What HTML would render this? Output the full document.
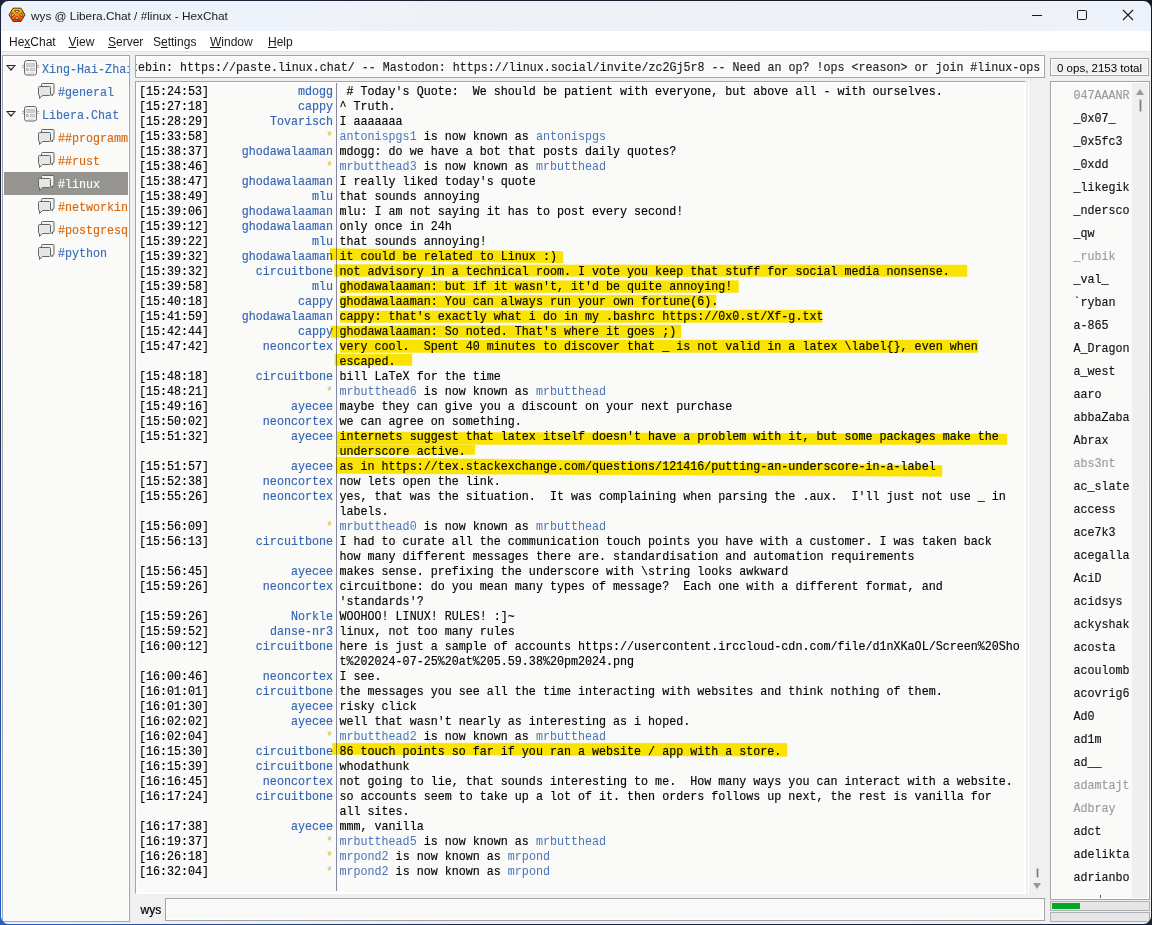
<!DOCTYPE html>
<html><head><meta charset="utf-8"><style>
*{margin:0;padding:0;box-sizing:border-box}
html,body{width:1152px;height:925px;overflow:hidden;background:linear-gradient(to right,#1d5fc4 0%,#1f4f9a 30%,#1a2a48 60%,#151c28 100%)}
#win{position:absolute;left:0;top:0;width:1152px;height:925px;background:#f0f0f0;overflow:hidden}
#frame{position:absolute;left:0;top:0;width:1152px;height:925px;border-radius:8px;box-shadow:inset -1px 1px 0 #1a2332;pointer-events:none}
#lb{position:absolute;left:0;top:0;width:1px;height:925px;background:linear-gradient(#1a2332 0%,#1c3050 40%,#1d5fc4 100%)}
#bb{position:absolute;left:0;top:924px;width:1152px;height:1px;background:linear-gradient(to right,#1d5fc4 0%,#1f4f9a 30%,#1a2a48 60%,#151c28 100%)}
.abs{position:absolute}
#title{position:absolute;left:0;top:0;width:1152px;height:31px;background:linear-gradient(to right,#eef2fa 0%,#eef2fa 25%,#f0f1f6 45%,#f0f1f6 85%,#eef2fa 95%)}
#ttext{position:absolute;left:31px;top:9px;font:11.8px "Liberation Sans",sans-serif;color:#1a1a1a;white-space:nowrap}
#menu{position:absolute;left:0;top:31px;width:1152px;height:21px;background:#ffffff;border-bottom:1px solid #e3e3e3}
.mi{position:absolute;top:4px;font:12px "Liberation Sans",sans-serif;color:#1a1a1a;white-space:nowrap}
.box{position:absolute;border:1px solid #a4a4aa;background:#fafaf9;box-shadow:inset 1px 1px 0 #fff,inset -1px -1px 0 #fff;overflow:hidden}
.mono{transform:scaleY(1.1);transform-origin:0 10.6px;-webkit-text-stroke:0.15px currentColor;font-family:"Liberation Mono",monospace;font-size:11.67px}
.ts,.nk,.tx{transform:scaleY(1.1);transform-origin:0 10.6px;-webkit-text-stroke:0.15px currentColor;position:absolute;font-family:"Liberation Mono",monospace;font-size:11.7px;line-height:15px;white-space:pre;color:#000}
.ts{left:139px}
.nk{right:819px;text-align:right;color:#3465b4}
.nk.st{color:#dcb420;-webkit-text-stroke:0}
.tx{left:339.5px}
.jn{color:#4a74b8;-webkit-text-stroke:0}
.hl{position:absolute;height:14px;background:#ffe600}
.nl{transform:scaleY(1.1);transform-origin:0 10.6px;-webkit-text-stroke:0.15px currentColor;position:absolute;left:1073.5px;font-family:"Liberation Mono",monospace;font-size:11.7px;line-height:15px;white-space:pre;color:#111}
.nl.aw{color:#9a9a9a}
.ic{position:absolute}
.tri{position:absolute;width:0;height:0;border-left:5px solid transparent;border-right:5px solid transparent;border-top:6px solid #222}
.tri:after{content:"";position:absolute;left:-3px;top:-5px;border-left:3px solid transparent;border-right:3px solid transparent;border-top:3.5px solid #fafaf9}
.tr{transform:scaleY(1.1);transform-origin:0 10.6px;-webkit-text-stroke:0.15px currentColor;position:absolute;font-family:"Liberation Mono",monospace;font-size:11.7px;line-height:15px;white-space:pre}
</style></head><body>
<div id="win">
<div id="title">
<svg class="abs" style="left:8px;top:7px" width="18" height="16" viewBox="8 7 18 16"><defs><linearGradient id="g1" x1="0" y1="0" x2="0" y2="1"><stop offset="0" stop-color="#ffd400"/><stop offset="0.5" stop-color="#ff8a00"/><stop offset="1" stop-color="#ff2a00"/></linearGradient></defs><path d="M13 8.2h8l4 6.6-4 6.6h-8l-4-6.6z" fill="url(#g1)" stroke="#4a1c00" stroke-width="0.9" stroke-linejoin="round"/><path d="M14.6 10.6h4.8l-2.4 2.7zM14.6 19h4.8l-2.4-2.7zM11.9 12.7v4.2l2.8-2.1zM22.1 12.7v4.2l-2.8-2.1z" fill="#e2e8f2" stroke="#3a1800" stroke-width="0.7" stroke-linejoin="round"/></svg>
<div id="ttext">wys @ Libera.Chat / #linux - HexChat</div>
<svg class="abs" style="left:1031px;top:8px" width="14" height="14"><path d="M1 7.5h10" stroke="#1a1a1a" stroke-width="1"/></svg>
<svg class="abs" style="left:1075px;top:9px" width="14" height="14"><rect x="2.5" y="1.5" width="9" height="9" rx="1.2" fill="none" stroke="#1a1a1a"/></svg>
<svg class="abs" style="left:1121px;top:8px" width="14" height="14"><path d="M2 2l10 10M12 2l-10 10" stroke="#1a1a1a" stroke-width="1.1"/></svg>
</div>
<div id="menu">
<div class="mi" style="left:9px">He<u>x</u>Chat</div><div class="mi" style="left:68.5px"><u>V</u>iew</div><div class="mi" style="left:108px"><u>S</u>erver</div><div class="mi" style="left:153px">S<u>e</u>ttings</div><div class="mi" style="left:210px"><u>W</u>indow</div><div class="mi" style="left:268px"><u>H</u>elp</div>
</div>
<!-- sidebar -->
<div class="box" style="left:2px;top:55px;width:128px;height:867px"><div class="abs" style="left:-3px;top:-56px"><div class="tri" style="left:6px;top:65px"></div><svg class="ic" style="left:22px;top:59px" width="17" height="18" viewBox="0 0 17 18"><rect x="2.5" y="1.5" width="12" height="14.5" rx="2.2" fill="#f6f6f6" stroke="#555" stroke-width="0.9"/><rect x="4.6" y="4.6" width="8" height="2.8" fill="#d0d0d0" stroke="#b4b4b4" stroke-width="0.6"/><circle cx="5.4" cy="10.5" r="1.1" fill="none" stroke="#777" stroke-width="0.8"/><rect x="8.6" y="9.2" width="4" height="2.6" fill="#dcdcdc" stroke="#aaa" stroke-width="0.6"/><path d="M6.5 14h1M8.5 14h1M10.5 14h1" stroke="#999" stroke-width="0.8"/><path d="M0 6.4h2.2M0 8.3h2.2M14.8 6.4H17M14.8 8.3H17" stroke="#8a8a8a" stroke-width="0.7"/></svg><div class="tr" style="left:42px;top:62.5px;color:#3a6fb8">Xing-Hai-Zhai</div><svg class="ic" style="left:37px;top:82px" width="18" height="18" viewBox="0 0 18 18"><path d="M4.5 4.5v-2a1 1 0 0 1 1-1h10.5a1 1 0 0 1 1 1v8.5a1 1 0 0 1-1 1h-0.5v2l-2-2" fill="#f2f2f2" stroke="#666"/><path d="M2.5 4.5h10a1 1 0 0 1 1 1v7a1 1 0 0 1-1 1H5.5l-3 3v-3a1 1 0 0 1-1-1v-7a1 1 0 0 1 1-1z" fill="#e6e6e6" stroke="#666"/></svg><div class="tr" style="left:58px;top:85.5px;color:#3a6fb8">#general</div><div class="tri" style="left:6px;top:111px"></div><svg class="ic" style="left:22px;top:105px" width="17" height="18" viewBox="0 0 17 18"><rect x="2.5" y="1.5" width="12" height="14.5" rx="2.2" fill="#f6f6f6" stroke="#555" stroke-width="0.9"/><rect x="4.6" y="4.6" width="8" height="2.8" fill="#d0d0d0" stroke="#b4b4b4" stroke-width="0.6"/><circle cx="5.4" cy="10.5" r="1.1" fill="none" stroke="#777" stroke-width="0.8"/><rect x="8.6" y="9.2" width="4" height="2.6" fill="#dcdcdc" stroke="#aaa" stroke-width="0.6"/><path d="M6.5 14h1M8.5 14h1M10.5 14h1" stroke="#999" stroke-width="0.8"/><path d="M0 6.4h2.2M0 8.3h2.2M14.8 6.4H17M14.8 8.3H17" stroke="#8a8a8a" stroke-width="0.7"/></svg><div class="tr" style="left:42px;top:108.5px;color:#3a6fb8">Libera.Chat</div><svg class="ic" style="left:37px;top:128px" width="18" height="18" viewBox="0 0 18 18"><path d="M4.5 4.5v-2a1 1 0 0 1 1-1h10.5a1 1 0 0 1 1 1v8.5a1 1 0 0 1-1 1h-0.5v2l-2-2" fill="#f2f2f2" stroke="#666"/><path d="M2.5 4.5h10a1 1 0 0 1 1 1v7a1 1 0 0 1-1 1H5.5l-3 3v-3a1 1 0 0 1-1-1v-7a1 1 0 0 1 1-1z" fill="#e6e6e6" stroke="#666"/></svg><div class="tr" style="left:58px;top:131.5px;color:#d8680e">##programming</div><svg class="ic" style="left:37px;top:151px" width="18" height="18" viewBox="0 0 18 18"><path d="M4.5 4.5v-2a1 1 0 0 1 1-1h10.5a1 1 0 0 1 1 1v8.5a1 1 0 0 1-1 1h-0.5v2l-2-2" fill="#f2f2f2" stroke="#666"/><path d="M2.5 4.5h10a1 1 0 0 1 1 1v7a1 1 0 0 1-1 1H5.5l-3 3v-3a1 1 0 0 1-1-1v-7a1 1 0 0 1 1-1z" fill="#e6e6e6" stroke="#666"/></svg><div class="tr" style="left:58px;top:154.5px;color:#d8680e">##rust</div><div style="position:absolute;left:4px;top:172px;width:124px;height:23px;background:#959490"></div><svg class="ic" style="left:37px;top:174px" width="18" height="18" viewBox="0 0 18 18"><path d="M4.5 4.5v-2a1 1 0 0 1 1-1h10.5a1 1 0 0 1 1 1v8.5a1 1 0 0 1-1 1h-0.5v2l-2-2" fill="#f2f2f2" stroke="#666"/><path d="M2.5 4.5h10a1 1 0 0 1 1 1v7a1 1 0 0 1-1 1H5.5l-3 3v-3a1 1 0 0 1-1-1v-7a1 1 0 0 1 1-1z" fill="#e6e6e6" stroke="#666"/></svg><div class="tr" style="left:58px;top:177.5px;color:#ffffff">#linux</div><svg class="ic" style="left:37px;top:197px" width="18" height="18" viewBox="0 0 18 18"><path d="M4.5 4.5v-2a1 1 0 0 1 1-1h10.5a1 1 0 0 1 1 1v8.5a1 1 0 0 1-1 1h-0.5v2l-2-2" fill="#f2f2f2" stroke="#666"/><path d="M2.5 4.5h10a1 1 0 0 1 1 1v7a1 1 0 0 1-1 1H5.5l-3 3v-3a1 1 0 0 1-1-1v-7a1 1 0 0 1 1-1z" fill="#e6e6e6" stroke="#666"/></svg><div class="tr" style="left:58px;top:200.5px;color:#d8680e">#networking</div><svg class="ic" style="left:37px;top:220px" width="18" height="18" viewBox="0 0 18 18"><path d="M4.5 4.5v-2a1 1 0 0 1 1-1h10.5a1 1 0 0 1 1 1v8.5a1 1 0 0 1-1 1h-0.5v2l-2-2" fill="#f2f2f2" stroke="#666"/><path d="M2.5 4.5h10a1 1 0 0 1 1 1v7a1 1 0 0 1-1 1H5.5l-3 3v-3a1 1 0 0 1-1-1v-7a1 1 0 0 1 1-1z" fill="#e6e6e6" stroke="#666"/></svg><div class="tr" style="left:58px;top:223.5px;color:#d8680e">#postgresql</div><svg class="ic" style="left:37px;top:243px" width="18" height="18" viewBox="0 0 18 18"><path d="M4.5 4.5v-2a1 1 0 0 1 1-1h10.5a1 1 0 0 1 1 1v8.5a1 1 0 0 1-1 1h-0.5v2l-2-2" fill="#f2f2f2" stroke="#666"/><path d="M2.5 4.5h10a1 1 0 0 1 1 1v7a1 1 0 0 1-1 1H5.5l-3 3v-3a1 1 0 0 1-1-1v-7a1 1 0 0 1 1-1z" fill="#e6e6e6" stroke="#666"/></svg><div class="tr" style="left:58px;top:246.5px;color:#3a6fb8">#python</div></div></div>
<!-- topic -->
<div class="box" style="left:135px;top:55px;width:910px;height:23px"><div class="mono" style="position:absolute;left:-26px;top:5px;white-space:pre;color:#1e1e1e;line-height:15px">Pastebin: https://paste.linux.chat/ -- Mastodon: https://linux.social/invite/zc2Gj5r8 -- Need an op? !ops &lt;reason&gt; or join #linux-ops</div></div>
<!-- ops -->
<div class="box" style="left:1050px;top:58px;width:99px;height:18px;background:#f0f0f0"><div style="position:absolute;left:6px;top:2.5px;font:11.5px 'Liberation Sans',sans-serif;color:#000;white-space:nowrap">0 ops, 2153 total</div></div>
<!-- chat -->
<div class="box" style="left:135px;top:81px;width:891px;height:813px;border-right-color:#fff;border-bottom-color:#fff"></div>
<div class="abs" style="left:336px;top:83px;width:1px;height:808px;background:#88889a"></div>
<div class="ts" style="top:85px">[15:24:53]</div><div class="nk" style="top:85px">mdogg</div><div class="tx" style="top:85px"> # Today&#x27;s Quote:  We should be patient with everyone, but above all - with ourselves.</div><div class="ts" style="top:100px">[15:27:18]</div><div class="nk" style="top:100px">cappy</div><div class="tx" style="top:100px">^ Truth.</div><div class="ts" style="top:115px">[15:28:29]</div><div class="nk" style="top:115px">Tovarisch</div><div class="tx" style="top:115px">I aaaaaaa</div><div class="ts" style="top:130px">[15:33:58]</div><div class="nk st" style="top:130px">*</div><div class="tx" style="top:130px"><span class="jn">antonispgs1</span> is now known as <span class="jn">antonispgs</span></div><div class="ts" style="top:145px">[15:38:37]</div><div class="nk" style="top:145px">ghodawalaaman</div><div class="tx" style="top:145px">mdogg: do we have a bot that posts daily quotes?</div><div class="ts" style="top:160px">[15:38:46]</div><div class="nk st" style="top:160px">*</div><div class="tx" style="top:160px"><span class="jn">mrbutthead3</span> is now known as <span class="jn">mrbutthead</span></div><div class="ts" style="top:175px">[15:38:47]</div><div class="nk" style="top:175px">ghodawalaaman</div><div class="tx" style="top:175px">I really liked today&#x27;s quote</div><div class="ts" style="top:190px">[15:38:49]</div><div class="nk" style="top:190px">mlu</div><div class="tx" style="top:190px">that sounds annoying</div><div class="ts" style="top:205px">[15:39:06]</div><div class="nk" style="top:205px">ghodawalaaman</div><div class="tx" style="top:205px">mlu: I am not saying it has to post every second!</div><div class="ts" style="top:220px">[15:39:12]</div><div class="nk" style="top:220px">ghodawalaaman</div><div class="tx" style="top:220px">only once in 24h</div><div class="ts" style="top:235px">[15:39:22]</div><div class="nk" style="top:235px">mlu</div><div class="tx" style="top:235px">that sounds annoying!</div><div class="ts" style="top:250px">[15:39:32]</div><div class="nk" style="top:250px">ghodawalaaman</div><div class="tx" style="top:250px">it could be related to Linux :)</div><div class="ts" style="top:265px">[15:39:32]</div><div class="nk" style="top:265px">circuitbone</div><div class="tx" style="top:265px">not advisory in a technical room. I vote you keep that stuff for social media nonsense.</div><div class="ts" style="top:280px">[15:39:58]</div><div class="nk" style="top:280px">mlu</div><div class="tx" style="top:280px">ghodawalaaman: but if it wasn&#x27;t, it&#x27;d be quite annoying!</div><div class="ts" style="top:295px">[15:40:18]</div><div class="nk" style="top:295px">cappy</div><div class="tx" style="top:295px">ghodawalaaman: You can always run your own fortune(6).</div><div class="ts" style="top:310px">[15:41:59]</div><div class="nk" style="top:310px">ghodawalaaman</div><div class="tx" style="top:310px">cappy: that&#x27;s exactly what i do in my .bashrc https://0x0.st/Xf-g.txt</div><div class="ts" style="top:325px">[15:42:44]</div><div class="nk" style="top:325px">cappy</div><div class="tx" style="top:325px">ghodawalaaman: So noted. That&#x27;s where it goes ;)</div><div class="ts" style="top:340px">[15:47:42]</div><div class="nk" style="top:340px">neoncortex</div><div class="tx" style="top:340px">very cool.  Spent 40 minutes to discover that _ is not valid in a latex \label{}, even when</div><div class="tx" style="top:355px">escaped.</div><div class="ts" style="top:370px">[15:48:18]</div><div class="nk" style="top:370px">circuitbone</div><div class="tx" style="top:370px">bill LaTeX for the time</div><div class="ts" style="top:385px">[15:48:21]</div><div class="nk st" style="top:385px">*</div><div class="tx" style="top:385px"><span class="jn">mrbutthead6</span> is now known as <span class="jn">mrbutthead</span></div><div class="ts" style="top:400px">[15:49:16]</div><div class="nk" style="top:400px">ayecee</div><div class="tx" style="top:400px">maybe they can give you a discount on your next purchase</div><div class="ts" style="top:415px">[15:50:02]</div><div class="nk" style="top:415px">neoncortex</div><div class="tx" style="top:415px">we can agree on something.</div><div class="ts" style="top:430px">[15:51:32]</div><div class="nk" style="top:430px">ayecee</div><div class="tx" style="top:430px">internets suggest that latex itself doesn&#x27;t have a problem with it, but some packages make the</div><div class="tx" style="top:445px">underscore active.</div><div class="ts" style="top:460px">[15:51:57]</div><div class="nk" style="top:460px">ayecee</div><div class="tx" style="top:460px">as in https://tex.stackexchange.com/questions/121416/putting-an-underscore-in-a-label</div><div class="ts" style="top:475px">[15:52:38]</div><div class="nk" style="top:475px">neoncortex</div><div class="tx" style="top:475px">now lets open the link.</div><div class="ts" style="top:490px">[15:55:26]</div><div class="nk" style="top:490px">neoncortex</div><div class="tx" style="top:490px">yes, that was the situation.  It was complaining when parsing the .aux.  I&#x27;ll just not use _ in</div><div class="tx" style="top:505px">labels.</div><div class="ts" style="top:520px">[15:56:09]</div><div class="nk st" style="top:520px">*</div><div class="tx" style="top:520px"><span class="jn">mrbutthead0</span> is now known as <span class="jn">mrbutthead</span></div><div class="ts" style="top:535px">[15:56:13]</div><div class="nk" style="top:535px">circuitbone</div><div class="tx" style="top:535px">I had to curate all the communication touch points you have with a customer. I was taken back</div><div class="tx" style="top:550px">how many different messages there are. standardisation and automation requirements</div><div class="ts" style="top:565px">[15:56:45]</div><div class="nk" style="top:565px">ayecee</div><div class="tx" style="top:565px">makes sense. prefixing the underscore with \string looks awkward</div><div class="ts" style="top:580px">[15:59:26]</div><div class="nk" style="top:580px">neoncortex</div><div class="tx" style="top:580px">circuitbone: do you mean many types of message?  Each one with a different format, and</div><div class="tx" style="top:595px">&#x27;standards&#x27;?</div><div class="ts" style="top:610px">[15:59:26]</div><div class="nk" style="top:610px">Norkle</div><div class="tx" style="top:610px">WOOHOO! LINUX! RULES! :]~</div><div class="ts" style="top:625px">[15:59:52]</div><div class="nk" style="top:625px">danse-nr3</div><div class="tx" style="top:625px">linux, not too many rules</div><div class="ts" style="top:640px">[16:00:12]</div><div class="nk" style="top:640px">circuitbone</div><div class="tx" style="top:640px">here is just a sample of accounts https://usercontent.irccloud-cdn.com/file/d1nXKaOL/Screen%20Sho</div><div class="tx" style="top:655px">t%202024-07-25%20at%205.59.38%20pm2024.png</div><div class="ts" style="top:670px">[16:00:46]</div><div class="nk" style="top:670px">neoncortex</div><div class="tx" style="top:670px">I see.</div><div class="ts" style="top:685px">[16:01:01]</div><div class="nk" style="top:685px">circuitbone</div><div class="tx" style="top:685px">the messages you see all the time interacting with websites and think nothing of them.</div><div class="ts" style="top:700px">[16:01:30]</div><div class="nk" style="top:700px">ayecee</div><div class="tx" style="top:700px">risky click</div><div class="ts" style="top:715px">[16:02:02]</div><div class="nk" style="top:715px">ayecee</div><div class="tx" style="top:715px">well that wasn&#x27;t nearly as interesting as i hoped.</div><div class="ts" style="top:730px">[16:02:04]</div><div class="nk st" style="top:730px">*</div><div class="tx" style="top:730px"><span class="jn">mrbutthead2</span> is now known as <span class="jn">mrbutthead</span></div><div class="ts" style="top:745px">[16:15:30]</div><div class="nk" style="top:745px">circuitbone</div><div class="tx" style="top:745px">86 touch points so far if you ran a website / app with a store.</div><div class="ts" style="top:760px">[16:15:39]</div><div class="nk" style="top:760px">circuitbone</div><div class="tx" style="top:760px">whodathunk</div><div class="ts" style="top:775px">[16:16:45]</div><div class="nk" style="top:775px">neoncortex</div><div class="tx" style="top:775px">not going to lie, that sounds interesting to me.  How many ways you can interact with a website.</div><div class="ts" style="top:790px">[16:17:24]</div><div class="nk" style="top:790px">circuitbone</div><div class="tx" style="top:790px">so accounts seem to take up a lot of it. then orders follows up next, the rest is vanilla for</div><div class="tx" style="top:805px">all sites.</div><div class="ts" style="top:820px">[16:17:38]</div><div class="nk" style="top:820px">ayecee</div><div class="tx" style="top:820px">mmm, vanilla</div><div class="ts" style="top:835px">[16:19:37]</div><div class="nk st" style="top:835px">*</div><div class="tx" style="top:835px"><span class="jn">mrbutthead5</span> is now known as <span class="jn">mrbutthead</span></div><div class="ts" style="top:850px">[16:26:18]</div><div class="nk st" style="top:850px">*</div><div class="tx" style="top:850px"><span class="jn">mrpond2</span> is now known as <span class="jn">mrpond</span></div><div class="ts" style="top:865px">[16:32:04]</div><div class="nk st" style="top:865px">*</div><div class="tx" style="top:865px"><span class="jn">mrpond2</span> is now known as <span class="jn">mrpond</span></div>
<svg class="abs" style="left:0;top:0;mix-blend-mode:multiply" width="1152" height="925"><g fill="#ffe800" stroke="#ffe800" stroke-width="0.4" stroke-linejoin="round"><polygon points="330,248.5 563,251.5 563,262.9 330,259.9"/><polygon points="334.5,264.5 967,265 967,276.4 334.5,276.4"/><polygon points="340,281 738.5,280.5 738.5,292.4 340,292.4"/><polygon points="340,296 716,295 716,307.4 340,307.4"/><polygon points="340,311 822,310 822,322.4 340,322.4"/><polygon points="331,326 681,325 681,337.9 331,337.4"/><polygon points="340,340 978,340 978,352.4 340,352.4"/><polygon points="335,354 412,354 412,365.4 335,365.4"/><polygon points="337,432 1007,434 1007,444.4 337,444.4"/><polygon points="337,445 475,445 475,454.4 337,454.4"/><polygon points="336,457 942,465.5 942,476.4 336,473.4"/><polygon points="332.5,743.3 787,743.3 787,756.4 332.5,754.4"/></g></svg>
<!-- chat scrollbar -->
<div class="abs" style="left:1028px;top:81px;width:1px;height:813px;background:#fff"></div>
<div class="abs" style="left:1037px;top:869px;width:1px;height:8px;background:#7a7a7a;box-shadow:0 0 0 0.5px #999"></div>
<svg class="abs" style="left:1033px;top:883px" width="9" height="7"><path d="M0 0h8l-4 6z" fill="#999"/></svg>
<!-- nick list -->
<div class="box" style="left:1050px;top:81px;width:100px;height:819px"></div>
<div class="abs" style="left:1132px;top:83px;width:16px;height:815px;background:#efefef"></div>
<svg class="abs" style="left:1136px;top:89px" width="9" height="7"><path d="M0 6h8l-4-6z" fill="#999"/></svg>
<div class="abs" style="left:1140px;top:100px;width:1px;height:11px;background:#7a7a7a;box-shadow:0 0 0 0.5px #999"></div>
<div class="nl aw" style="top:89px">047AAANR</div><div class="nl" style="top:112px">_0x07_</div><div class="nl" style="top:135px">_0x5fc3</div><div class="nl" style="top:158px">_0xdd</div><div class="nl" style="top:181px">_likegik</div><div class="nl" style="top:204px">_ndersco</div><div class="nl" style="top:227px">_qw</div><div class="nl aw" style="top:250px">_rubik</div><div class="nl" style="top:273px">_val_</div><div class="nl" style="top:296px">`ryban</div><div class="nl" style="top:319px">a-865</div><div class="nl" style="top:342px">A_Dragon</div><div class="nl" style="top:365px">a_west</div><div class="nl" style="top:388px">aaro</div><div class="nl" style="top:411px">abbaZaba</div><div class="nl" style="top:434px">Abrax</div><div class="nl aw" style="top:457px">abs3nt</div><div class="nl" style="top:480px">ac_slate</div><div class="nl" style="top:503px">access</div><div class="nl" style="top:526px">ace7k3</div><div class="nl" style="top:549px">acegalla</div><div class="nl" style="top:572px">AciD</div><div class="nl" style="top:595px">acidsys</div><div class="nl" style="top:618px">ackyshak</div><div class="nl" style="top:641px">acosta</div><div class="nl" style="top:664px">acoulomb</div><div class="nl" style="top:687px">acovrig6</div><div class="nl" style="top:710px">Ad0</div><div class="nl" style="top:733px">ad1m</div><div class="nl" style="top:756px">ad__</div><div class="nl aw" style="top:779px">adamtajt</div><div class="nl aw" style="top:802px">Adbray</div><div class="nl" style="top:825px">adct</div><div class="nl" style="top:848px">adelikta</div><div class="nl" style="top:871px">adrianbo</div>
<div class="abs" style="left:1100px;top:895px;width:1px;height:3px;background:#555"></div>
<!-- input -->
<div class="abs" style="left:140.5px;top:903px;font:12px 'Liberation Sans',sans-serif;color:#000;-webkit-text-stroke:0.2px #000">wys</div>
<div class="box" style="left:165px;top:898px;width:880px;height:23px"></div>
<div class="box" style="left:1050px;top:901px;width:100px;height:10px;background:#e6e6e6;box-shadow:none;border-color:#b0b0b4"><div class="abs" style="left:1px;top:1px;width:28px;height:6px;background:#00aa22"></div></div>
<div class="box" style="left:1050px;top:912px;width:100px;height:10px;background:#e6e6e6;box-shadow:none;border-color:#b0b0b4"></div>
</div>
<svg class="abs" style="left:0;top:0" width="1152" height="925"><defs><linearGradient id="fg" gradientUnits="userSpaceOnUse" x1="1152" y1="0" x2="0" y2="925"><stop offset="0" stop-color="#141a24"/><stop offset="0.75" stop-color="#1a2440"/><stop offset="0.84" stop-color="#1d3a78"/><stop offset="0.95" stop-color="#1d5cc0"/><stop offset="1" stop-color="#1d62cc"/></linearGradient><linearGradient id="bg2" x1="0" y1="0" x2="1" y2="0"><stop offset="0" stop-color="#1d5fc4"/><stop offset="0.3" stop-color="#1f4f9a"/><stop offset="0.6" stop-color="#1a2a48"/><stop offset="1" stop-color="#151c28"/></linearGradient></defs><path fill-rule="evenodd" fill="url(#fg)" d="M0 0H1152V925H0z M8.5 1H1143.5A7.5 7.5 0 0 1 1151 8.5V916.5A7.5 7.5 0 0 1 1143.5 924H8.5A7.5 7.5 0 0 1 1 916.5V8.5A7.5 7.5 0 0 1 8.5 1z"/></svg>
</body></html>
